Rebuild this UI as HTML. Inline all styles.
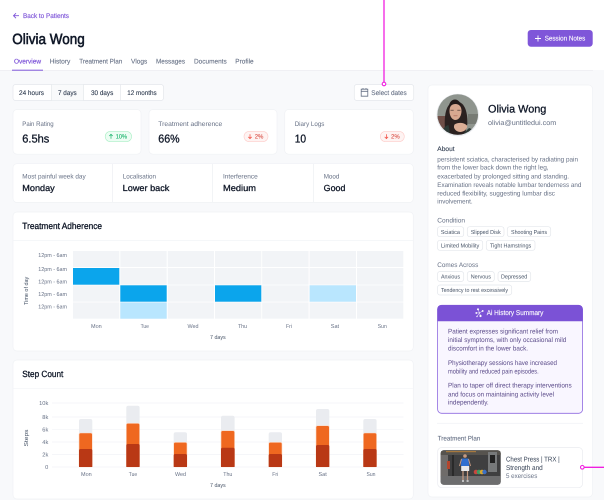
<!DOCTYPE html>
<html lang="en"><head><meta charset="utf-8"><title>Olivia Wong</title>
<style>
html,body{margin:0;padding:0;width:604px;height:500px;overflow:hidden;background:#f8f9fb}
svg{display:block;font-family:"Liberation Sans",sans-serif;text-rendering:geometricPrecision;filter:blur(.25px)}
.g{fill:#667085}.d{fill:#101828}.m{fill:#344054}
.w{stroke:#101828;stroke-width:.3}
.s{font-size:6.6px}
.x{font-size:5.7px;fill:#667085}
.c{font-size:5.8px;fill:#475467}
.p{font-size:6.6px;fill:#667085}
.a{font-size:6.7px;fill:#5b4b8a}
.t{font-size:6.7px;fill:#667085;stroke:#667085;stroke-width:.1}
.card{fill:#fff;stroke:#f0f2f5;stroke-width:.7}
.chip{fill:#fff;stroke:#e4e7ec;stroke-width:.7}
.cell{fill:#f2f4f7}
.ln{stroke:#f2f4f7;stroke-width:.7}
.lg{fill:#eaecf0}.or{fill:#ef6820;stroke:#fbd9c6;stroke-width:.6}.dk{fill:#b93815}
</style></head><body>
<svg width="604" height="500" viewBox="0 0 604 500" xmlns="http://www.w3.org/2000/svg">
<rect width="604" height="500" fill="#f8f9fb"/>
<!-- header -->
<rect width="604" height="70" fill="#fff"/>
<line x1="0" y1="70.3" x2="593" y2="70.3" stroke="#eaecf0" stroke-width=".7"/>
<path d="M19 15.7H13.5M16 13.2l-2.5 2.5 2.5 2.5" fill="none" stroke="#7f56d9" stroke-width=".9"/>
<text x="23" y="18" textLength="46" font-size="6.8" fill="#7f56d9" stroke="#7f56d9" stroke-width=".16">Back to Patients</text>
<text x="12.3" y="44" textLength="72.4" class="d" font-size="14.8" stroke="#101828" stroke-width=".6">Olivia Wong</text>
<rect x="527.7" y="30" width="65" height="16.7" rx="3.2" fill="#7f56d9"/>
<path d="M538 35.5v6M535 38.5h6" stroke="#fff" stroke-width=".9"/>
<text x="544.7" y="40.7" textLength="40.6" font-size="6.8" fill="#fff" fill-opacity=".92" stroke="#fff" stroke-width=".14">Session Notes</text>
<g class="t">
<text x="14" y="63.7" textLength="27" style="fill:#7f56d9;stroke:#7f56d9;stroke-width:.2">Overview</text>
<text x="49.7" y="63.7" textLength="20.6">History</text>
<text x="79.3" y="63.7" textLength="43">Treatment Plan</text>
<text x="131" y="63.7" textLength="16.3">Vlogs</text>
<text x="156" y="63.7" textLength="29">Messages</text>
<text x="194" y="63.7" textLength="32.7">Documents</text>
<text x="235.3" y="63.7" textLength="18.3">Profile</text>
</g>
<rect x="12" y="69.7" width="31" height="1" fill="#7f56d9"/>
<!-- time range -->
<rect x="13" y="84.5" width="150.5" height="16" rx="2.5" fill="#fff" stroke="#e4e7ec" stroke-width=".7"/>
<rect x="51.5" y="84.8" width="32" height="15.4" fill="#f9fafb"/>
<path d="M51.5 84.5v16M83.5 84.5v16M120.5 84.5v16" stroke="#e4e7ec" stroke-width=".7"/>
<g font-size="6.7" fill="#344054" stroke="#344054" stroke-width=".12">
<text x="19" y="95" textLength="25">24 hours</text>
<text x="58" y="95" textLength="18.7">7 days</text>
<text x="91" y="95" textLength="22.3">30 days</text>
<text x="127.3" y="95" textLength="29.4">12 months</text>
</g>
<rect x="354.3" y="84.5" width="59.4" height="16" rx="2.5" fill="#fff" stroke="#e4e7ec" stroke-width=".7"/>
<path d="M361.2 89.2h6.6v7h-6.6zM361.2 91.3h6.6M363 88v1.6M366 88v1.6" fill="none" stroke="#667085" stroke-width=".8"/>
<text x="371.3" y="95" textLength="35.4" class="t">Select dates</text>
<!-- stat cards -->
<rect class="card" x="13" y="109.5" width="128" height="44.7" rx="4"/>
<rect class="card" x="149" y="109.5" width="128" height="44.7" rx="4"/>
<rect class="card" x="284.7" y="109.5" width="128.6" height="44.7" rx="4"/>
<text x="22.3" y="126" textLength="31.3" class="s g">Pain Rating</text>
<text x="158.3" y="126" textLength="64" class="s g">Treatment adherence</text>
<text x="294.7" y="126" textLength="29.7" class="s g">Diary Logs</text>
<g class="d w" font-size="11.4">
<text x="22.3" y="142.3" textLength="27">6.5hs</text>
<text x="158.3" y="142.3" textLength="21.3">66%</text>
<text x="294.7" y="142.3" textLength="11.3">10</text>
</g>
<rect x="105.2" y="131.4" width="26.4" height="10.2" rx="5.1" fill="#ecfdf3" stroke="#abefc6" stroke-width=".6"/>
<path d="M111 138.8v-4.4M109.3 136l1.7-1.7 1.7 1.7" fill="none" stroke="#17b26a" stroke-width=".7"/>
<text x="115.7" y="138.6" textLength="11.3" font-size="6.2" fill="#17b26a" stroke="#17b26a" stroke-width=".1">10%</text>
<rect x="244" y="131.4" width="24" height="10.2" rx="5.1" fill="#fef3f2" stroke="#fecdca" stroke-width=".6"/>
<path d="M250 134.2v4.4M248.3 136.9l1.7 1.7 1.7-1.7" fill="none" stroke="#f04438" stroke-width=".7"/>
<text x="254.7" y="138.6" textLength="8.7" font-size="6.2" fill="#d9534a" stroke="#d9534a" stroke-width=".1">2%</text>
<rect x="380.3" y="131.4" width="24" height="10.2" rx="5.1" fill="#fef3f2" stroke="#fecdca" stroke-width=".6"/>
<path d="M386.4 134.2v4.4M384.7 136.9l1.7 1.7 1.7-1.7" fill="none" stroke="#f04438" stroke-width=".7"/>
<text x="391" y="138.6" textLength="8.7" font-size="6.2" fill="#d9534a" stroke="#d9534a" stroke-width=".1">2%</text>
<!-- second row -->
<rect class="card" x="13" y="163.7" width="400.3" height="38.8" rx="4"/>
<path d="M112.5 164v38M212.7 164v38M313.3 164v38" stroke="#eaecf0" stroke-width=".6"/>
<g class="s g">
<text x="22.3" y="178.3" textLength="63.4">Most painful week day</text>
<text x="122.7" y="178.3" textLength="33.3">Localisation</text>
<text x="223" y="178.3" textLength="34.7">Interference</text>
<text x="323.7" y="178.3" textLength="15.7">Mood</text>
</g>
<g class="d w" font-size="8.8">
<text x="22.3" y="191.2" textLength="32.4">Monday</text>
<text x="122.7" y="191.2" textLength="46.7">Lower back</text>
<text x="223" y="191.2" textLength="33">Medium</text>
<text x="323.7" y="191.2" textLength="21.7">Good</text>
</g>
<!-- adherence -->
<rect class="card" x="13" y="212" width="400.3" height="139" rx="4"/>
<line class="ln" x1="13" y1="240.5" x2="413" y2="240.5"/>
<text x="22.3" y="229" textLength="79.7" class="d w" font-size="9">Treatment Adherence</text>
<g class="cell">
<rect x="73" y="251" width="46.3" height="16"/><rect x="120.3" y="251" width="46.4" height="16"/><rect x="167.8" y="251" width="46.2" height="16"/><rect x="215" y="251" width="46.3" height="16"/><rect x="262.2" y="251" width="46.4" height="16"/><rect x="309.6" y="251" width="46.4" height="16"/><rect x="357" y="251" width="46.3" height="16"/>
<rect x="73" y="268" width="46.3" height="16.7"/><rect x="120.3" y="268" width="46.4" height="16.7"/><rect x="167.8" y="268" width="46.2" height="16.7"/><rect x="215" y="268" width="46.3" height="16.7"/><rect x="262.2" y="268" width="46.4" height="16.7"/><rect x="309.6" y="268" width="46.4" height="16.7"/><rect x="357" y="268" width="46.3" height="16.7"/>
<rect x="73" y="285.3" width="46.3" height="16.4"/><rect x="120.3" y="285.3" width="46.4" height="16.4"/><rect x="167.8" y="285.3" width="46.2" height="16.4"/><rect x="215" y="285.3" width="46.3" height="16.4"/><rect x="262.2" y="285.3" width="46.4" height="16.4"/><rect x="309.6" y="285.3" width="46.4" height="16.4"/><rect x="357" y="285.3" width="46.3" height="16.4"/>
<rect x="73" y="302.4" width="46.3" height="16.3"/><rect x="120.3" y="302.4" width="46.4" height="16.3"/><rect x="167.8" y="302.4" width="46.2" height="16.3"/><rect x="215" y="302.4" width="46.3" height="16.3"/><rect x="262.2" y="302.4" width="46.4" height="16.3"/><rect x="309.6" y="302.4" width="46.4" height="16.3"/><rect x="357" y="302.4" width="46.3" height="16.3"/>
</g>
<rect x="73" y="268" width="46.3" height="16.7" fill="#0ba5ec"/>
<rect x="120.3" y="285.3" width="46.4" height="16.4" fill="#0ba5ec"/>
<rect x="215" y="285.3" width="46.3" height="16.4" fill="#0ba5ec"/>
<rect x="120.3" y="302.4" width="46.4" height="16.3" fill="#b9e6fe"/>
<rect x="309.6" y="285.3" width="46.4" height="16.4" fill="#b9e6fe"/>
<g class="x">
<text x="38.3" y="257.2" textLength="28.7">12pm - 6am</text>
<text x="38.3" y="271" textLength="28.7">12pm - 6am</text>
<text x="38.3" y="283.4" textLength="28.7">12pm - 6am</text>
<text x="38.3" y="295.9" textLength="28.7">12pm - 6am</text>
<text x="38.3" y="308.4" textLength="28.7">12pm - 6am</text>
<text x="91" y="328" textLength="10.7">Mon</text>
<text x="140.6" y="328" textLength="8.3">Tue</text>
<text x="187.5" y="328" textLength="11">Wed</text>
<text x="238" y="328" textLength="9">Thu</text>
<text x="286" y="328" textLength="6">Fri</text>
<text x="330.8" y="328" textLength="8.3">Sat</text>
<text x="377.8" y="328" textLength="9">Sun</text>
</g>
<text transform="translate(28.2 305) rotate(-90)" textLength="28.3" class="x" style="fill:#475467">Time of day</text>
<text x="210" y="339.2" textLength="15.7" class="x" style="fill:#475467">7 days</text>
<!-- steps -->
<rect class="card" x="13" y="360" width="400.3" height="139" rx="4"/>
<line class="ln" x1="13" y1="388.3" x2="413" y2="388.3"/>
<text x="22.3" y="377" textLength="41" class="d w" font-size="9">Step Count</text>
<path class="ln" d="M52 403H403.5M52 417H403.5M52 429.7H403.5M52 442H403.5M52 454.5H403.5M52 467H403.5" fill="none"/>
<g class="x" text-anchor="end">
<text x="48.3" y="405">10k</text><text x="48.3" y="419">8k</text><text x="48.3" y="431.7">6k</text><text x="48.3" y="444">4k</text><text x="48.3" y="456.5">2k</text><text x="48.3" y="469">0</text>
</g>
<text transform="translate(28.2 446.5) rotate(-90)" textLength="17" class="x" style="fill:#475467">Steps</text>
<g class="lg">
<rect x="79" y="419" width="13.3" height="30" rx="2"/><rect x="126.3" y="405.7" width="13.3" height="40" rx="2"/><rect x="173.7" y="432.3" width="13.3" height="20" rx="2"/><rect x="221" y="415.7" width="13.6" height="30" rx="2"/><rect x="268.7" y="432.3" width="13.3" height="20" rx="2"/><rect x="316" y="409" width="13.3" height="30" rx="2"/><rect x="363.3" y="419" width="13.3" height="30" rx="2"/>
</g>
<g class="or">
<rect x="79" y="433" width="13.3" height="34" rx="1.6"/><rect x="126.3" y="423.3" width="13.3" height="43.7" rx="1.6"/><rect x="173.7" y="442.3" width="13.3" height="24.7" rx="1.6"/><rect x="221" y="430.7" width="13.6" height="36.3" rx="1.6"/><rect x="268.7" y="442.3" width="13.3" height="24.7" rx="1.6"/><rect x="316" y="425.7" width="13.3" height="41.3" rx="1.6"/><rect x="363.3" y="433" width="13.3" height="34" rx="1.6"/>
</g>
<g class="dk">
<path d="M79 467v-16.5q0-1.5 1.5-1.5h10.3q1.5 0 1.5 1.5V467z"/><path d="M126.3 467v-21.5q0-1.5 1.5-1.5h10.3q1.5 0 1.5 1.5V467z"/><path d="M173.7 467v-11.5q0-1.5 1.5-1.5h10.3q1.5 0 1.5 1.5V467z"/><path d="M221 467v-17.8q0-1.5 1.5-1.5h10.6q1.5 0 1.5 1.5V467z"/><path d="M268.7 467v-11.5q0-1.5 1.5-1.5h10.3q1.5 0 1.5 1.5V467z"/><path d="M316 467v-20.5q0-1.5 1.5-1.5h10.3q1.5 0 1.5 1.5V467z"/><path d="M363.3 467v-16.5q0-1.5 1.5-1.5h10.3q1.5 0 1.5 1.5V467z"/>
</g>
<g class="x">
<text x="81" y="476" textLength="10.7">Mon</text>
<text x="128.8" y="476" textLength="8.3">Tue</text>
<text x="175" y="476" textLength="11">Wed</text>
<text x="223.3" y="476" textLength="9">Thu</text>
<text x="272.3" y="476" textLength="6">Fri</text>
<text x="318.5" y="476" textLength="8.3">Sat</text>
<text x="366.5" y="476" textLength="9">Sun</text>
</g>
<text x="210" y="487.2" textLength="15.7" class="x" style="fill:#475467">7 days</text>
<!-- right panel -->
<rect class="card" x="428" y="85" width="164.5" height="412" rx="4"/>
<defs>
<clipPath id="av"><circle cx="457.7" cy="114.5" r="20.3"/></clipPath>
<clipPath id="gy"><rect x="440.7" y="450.3" width="60" height="34.4" rx="3"/></clipPath>
</defs>
<circle cx="457.7" cy="115" r="21.2" fill="#e9ebef"/>
<g clip-path="url(#av)">
<rect x="437" y="94" width="42" height="42" fill="#8f958e"/>
<rect x="437" y="116" width="11" height="20" fill="#6f4f48"/>
<rect x="468" y="114" width="11" height="10" fill="#777b74"/>
<path d="M445.500 136c-1.500-14-2-33 9.500-34.500 10.500-1 12.500 12 12.500 22l-3 12.500z" fill="#2b2120"/>
<path d="M449.500 111c0-5 2.500-7 6-7s6 2.500 6 7-2.500 9-6 9-6-4-6-9z" fill="#d8a890"/>
<path d="M450.500 110.200h3.200M457.300 110.200h3.200" stroke="#3a2a26" stroke-width=".7"/>
<path d="M453.500 115.800h4" stroke="#a85f55" stroke-width=".7"/>
<path d="M449 108c1.500-5 10-6 12.500-1-.5-4-3-7.500-6.500-7.500s-6.500 3.500-6 8.500z" fill="#241b1a"/>
<path d="M441 136c1-7 4-10 7.500-11l2 11zM461 136l8-8c3.500 1 6 4 7 8z" fill="#2d3a36"/>
<path d="M454.500 124.500c4-2.500 9.500-2 12.500 1 1 2.500-2.500 6.500-6.500 6.500s-8-3.500-6-7.500z" fill="#dcae96"/>
</g>
<text x="488" y="112.7" textLength="58.3" class="d w" font-size="10.8">Olivia Wong</text>
<text x="488" y="124.8" textLength="68.3" font-size="7" class="g">olivia@untitledui.com</text>
<text x="437.3" y="151" textLength="17.3" class="m" font-size="6.6" stroke="#344054" stroke-width=".12">About</text>
<g class="p">
<text x="437.3" y="161.3" textLength="140.7">persistent sciatica, characterised by radiating pain</text>
<text x="437.3" y="169.7" textLength="111.3">from the lower back down the right leg,</text>
<text x="437.3" y="178.3" textLength="131.7">exacerbated by prolonged sitting and standing.</text>
<text x="437.3" y="187" textLength="144">Examination reveals notable lumbar tenderness and</text>
<text x="437.3" y="195.3" textLength="117.7">reduced flexibility, suggesting lumbar disc</text>
<text x="437.3" y="203.7" textLength="35.3">involvement.</text>
</g>
<text x="437.3" y="222.4" textLength="27.7" class="g" font-size="6.6">Condition</text>
<rect class="chip" x="437.5" y="226.7" width="26.2" height="10" rx="2.5"/>
<rect class="chip" x="467.3" y="226.7" width="36.7" height="10" rx="2.5"/>
<rect class="chip" x="507.3" y="226.7" width="43.4" height="10" rx="2.5"/>
<rect class="chip" x="437.5" y="240.3" width="45.2" height="10" rx="2.5"/>
<rect class="chip" x="486.3" y="240.3" width="48.7" height="10" rx="2.5"/>
<g class="c">
<text x="440.7" y="233.8" textLength="19.3">Sciatica</text>
<text x="470.7" y="233.8" textLength="30">Slipped Disk</text>
<text x="511" y="233.8" textLength="36">Shooting Pains</text>
<text x="441" y="247.4" textLength="38.3">Limited Mobility</text>
<text x="490" y="247.4" textLength="41.3">Tight Hamstrings</text>
</g>
<text x="437.3" y="267" textLength="41" class="g" font-size="6.6">Comes Across</text>
<rect class="chip" x="437.5" y="271.5" width="26.2" height="10" rx="2.5"/>
<rect class="chip" x="467.3" y="271.5" width="27" height="10" rx="2.5"/>
<rect class="chip" x="498" y="271.5" width="32.7" height="10" rx="2.5"/>
<rect class="chip" x="437.5" y="285" width="74.2" height="10" rx="2.5"/>
<g class="c">
<text x="441" y="278.6" textLength="19">Anxious</text>
<text x="470.7" y="278.6" textLength="20.3">Nervous</text>
<text x="501" y="278.6" textLength="26.3">Depressed</text>
<text x="441" y="292.1" textLength="67">Tendency to rest excessively</text>
</g>
<!-- AI box -->
<rect x="437.6" y="305.3" width="145" height="108" rx="4" fill="#f9f6ff" stroke="#8f6be0" stroke-width=".8"/>
<path d="M437.3 321.3V309a4 4 0 0 1 4-4H578.7a4 4 0 0 1 4 4V321.3z" fill="#7b52d6"/>
<g fill="#fff" stroke="#fff" stroke-width=".5">
<circle cx="478" cy="309.3" r=".8"/><circle cx="482.7" cy="311" r=".7"/><circle cx="476.3" cy="313" r=".7"/><circle cx="480.5" cy="316" r=".9"/><circle cx="477" cy="316.5" r=".5"/>
<path d="M478 309.3l1.500 3.500 3.200-1.800M476.300 313l3.200-.2 1 3.200M477 316.500l2.500-3.700" fill="none"/>
</g>
<text x="486.7" y="315.2" textLength="56.7" font-size="7" fill="#fff" fill-opacity=".95" stroke="#fff" stroke-width=".14">Ai History Summary</text>
<g class="a">
<text x="448" y="333.4" textLength="110">Patient expresses significant relief from</text>
<text x="448" y="342" textLength="118.3">initial symptoms, with only occasional mild</text>
<text x="448" y="350.4" textLength="80">discomfort in the lower back.</text>
<text x="448" y="365" textLength="109">Physiotherapy sessions have increased</text>
<text x="448" y="373.4" textLength="90.7">mobility and reduced pain episodes.</text>
<text x="448" y="387.7" textLength="123.7">Plan to taper off direct therapy interventions</text>
<text x="448" y="396.3" textLength="106">and focus on maintaining activity level</text>
<text x="448" y="404.7" textLength="40.7">independently.</text>
</g>
<line x1="437" y1="423.3" x2="583" y2="423.3" stroke="#f2f4f7" stroke-width=".8"/>
<text x="437.7" y="440.3" textLength="42.7" class="g" font-size="6.6" stroke="#667085" stroke-width=".1">Treatment Plan</text>
<rect class="chip" x="437.7" y="447.5" width="144.8" height="40.2" rx="4" style="stroke:#eaecf0"/>
<g clip-path="url(#gy)">
<rect x="440" y="450" width="61" height="35" fill="#3f3f40"/>
<rect x="440" y="450" width="61" height="5" fill="#56534e"/>
<rect x="446" y="451" width="30" height="1.2" fill="#a8793e"/>
<rect x="440" y="455" width="8" height="22" fill="#6f6c6a"/>
<rect x="452" y="455" width="2" height="22" fill="#2a2a2a"/>
<rect x="447" y="461" width="3" height="8" fill="#b3452d"/>
<rect x="488" y="452" width="9" height="20" fill="#77797a"/>
<rect x="490" y="455" width="5" height="8" fill="#222"/>
<rect x="440" y="476" width="61" height="9" fill="#6d6d6e"/>
<circle cx="476" cy="472" r="2.3" fill="#c9463d"/><circle cx="479" cy="472" r="2.3" fill="#3b9a64"/><circle cx="482" cy="472" r="2.3" fill="#d6a52f"/><circle cx="484.5" cy="472" r="2.2" fill="#3b6fc4"/>
<circle cx="465" cy="456" r="1.8" fill="#c79a80"/>
<path d="M461.5 458.5h7l.6 7.5h-8.2z" fill="#2f6fd0"/>
<path d="M461.5 459l-2 7M468.5 459l2 7" stroke="#c79a80" stroke-width="1"/>
<rect x="461.2" y="466" width="8" height="5" fill="#e9e9ea"/>
<path d="M463 471v9M467.5 471v9" stroke="#c79a80" stroke-width="1.2"/>
<path d="M462 481h2M466.6 481h2" stroke="#f3f3f3" stroke-width="1.2"/>
</g>
<text x="506" y="461.3" textLength="53.7" font-size="7" class="m">Chest Press | TRX |</text>
<text x="506" y="470" textLength="36.7" font-size="7" class="m">Strength and</text>
<text x="506" y="478.2" textLength="31.3" font-size="6.6" class="g">5 exercises</text>
<!-- annotations -->
<line x1="384" y1="0" x2="384" y2="84" stroke="#f01fe0" stroke-width="1.3"/>
<circle cx="384" cy="84" r="1.8" fill="#fff" stroke="#f01fe0" stroke-width="1.1"/>
<line x1="584" y1="467.3" x2="604" y2="467.3" stroke="#f01fe0" stroke-width="1.3"/>
<circle cx="582.3" cy="467.3" r="1.8" fill="#fff" stroke="#f01fe0" stroke-width="1.1"/>
</svg>
<script>document.querySelectorAll('text[textLength]').forEach(function(t){t.setAttribute('lengthAdjust','spacingAndGlyphs')})</script>
</body></html>
